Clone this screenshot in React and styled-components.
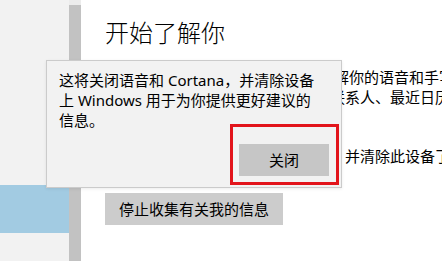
import React from "react";
import styled, { createGlobalStyle } from "styled-components";

const Global = createGlobalStyle`
  html, body { margin: 0; padding: 0; background: #ffffff; }
  body { font-family: "Noto Sans", "Noto Sans CJK SC", sans-serif; }
`;

const Screen = styled.div`
  position: relative;
  width: 442px;
  height: 261px;
  overflow: hidden;
  display: flex;
  background: #ffffff;
  color: #000000;
  font-size: 15px;
`;

const Nav = styled.aside`
  width: 81px;
  flex: none;
  display: flex;
  background: #f2f2f2;
`;

const NavList = styled.div`
  width: 69px;
  display: flex;
  flex-direction: column;
  padding-top: 185px;
`;

const NavItem = styled.div`
  height: 48px;
  background: ${(p) => (p.$active ? "#a2cbe2" : "transparent")};
`;

const ScrollTrack = styled.div`
  width: 12px;
  display: flex;
  flex-direction: column;
`;

const ScrollCap = styled.div`
  height: 5px;
  background: #ececec;
`;

const ScrollThumb = styled.div`
  flex: 1;
  background: #c2c2c2;
`;

const Content = styled.main`
  flex: 1;
  min-width: 0;
  padding: 16px 0 0 24px;
  display: flex;
  flex-direction: column;
  align-items: flex-start;
`;

const Title = styled.h1`
  margin: 0;
  font-family: "Noto Sans CJK SC", sans-serif;
  font-weight: 300;
  font-size: 24px;
  line-height: 32px;
  white-space: nowrap;
`;

const Para = styled.p`
  margin: ${(p) => p.$top}px 0 0 0;
  font-size: 15px;
  line-height: 20px;
  white-space: nowrap;
  text-indent: ${(p) => p.$indent || 0}px;
`;

const GreyButton = styled.button`
  margin-top: ${(p) => p.$top || 0}px;
  height: 32px;
  padding: 0 14px;
  border: none;
  background: #cccccc;
  color: #000000;
  font-family: "Noto Sans", "Noto Sans CJK SC", sans-serif;
  font-size: 15px;
  line-height: 20px;
  white-space: nowrap;
  cursor: default;
`;

const Flyout = styled.div`
  position: absolute;
  left: 46px;
  top: 60px;
  width: 296px;
  box-sizing: border-box;
  background: #f2f2f2;
  border: 1px solid #cbcbcb;
  box-shadow: 0 1px 3px rgba(0, 0, 0, 0.08);
  padding: 9px 12px 11px 12px;
  display: flex;
  flex-direction: column;
`;

const FlyoutText = styled.p`
  margin: 0;
  font-size: 15px;
  line-height: 20px;
  white-space: nowrap;
`;

const FlyoutFooter = styled.div`
  margin-top: 14px;
  display: flex;
  justify-content: flex-end;
`;

const Highlight = styled.div`
  position: relative;
  display: flex;
`;

const RedBox = styled.div`
  position: absolute;
  left: -9px;
  right: -10px;
  top: -20px;
  bottom: -9px;
  border: 3px solid #e2141b;
  pointer-events: none;
`;

const CloseButton = styled(GreyButton)`
  width: 90px;
  padding: 0;
  background: #c6c6c6;
`;

export default function App() {
  return (
    <>
      <Global />
      <Screen>
        <Nav>
          <NavList>
            <NavItem $active />
          </NavList>
          <ScrollTrack>
            <ScrollCap />
            <ScrollThumb />
          </ScrollTrack>
        </Nav>
        <Content>
          <Title>开始了解你</Title>
          <Para $top={19} $indent={4}>
            通过收集相关信息，可以更好地了解你的语音和手写模式，
            <br />
            为此，会收集你的一些信息，例如联系人、最近日历事件等。
          </Para>
          <Para $top={39}>这将关闭语音服务和键入建议功能，并清除此设备了解的你的信息。</Para>
          <GreyButton $top={27}>停止收集有关我的信息</GreyButton>
        </Content>
        <Flyout>
          <FlyoutText>
            这将关闭语音和 Cortana，并清除设备
            <br />
            上 Windows 用于为你提供更好建议的
            <br />
            信息。
          </FlyoutText>
          <FlyoutFooter>
            <Highlight>
              <CloseButton>关闭</CloseButton>
              <RedBox />
            </Highlight>
          </FlyoutFooter>
        </Flyout>
      </Screen>
    </>
  );
}
